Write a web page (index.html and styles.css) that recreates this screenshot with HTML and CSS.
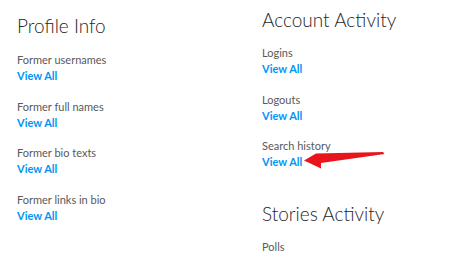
FILE: index.html
```html
<!DOCTYPE html>
<html>
<head>
    <title>Access Data</title>
    <link rel="stylesheet" href="styles.css">
</head>
<body>
    <div class="page">
        <div class="column column-left">
            <section class="section">
                <h2>Profile Info</h2>
                <div class="item">
                    <div class="label">Former usernames</div>
                    <a class="view-all" href="#">View All</a>
                </div>
                <div class="item">
                    <div class="label">Former full names</div>
                    <a class="view-all" href="#">View All</a>
                </div>
                <div class="item">
                    <div class="label">Former bio texts</div>
                    <a class="view-all" href="#">View All</a>
                </div>
                <div class="item">
                    <div class="label">Former links in bio</div>
                    <a class="view-all" href="#">View All</a>
                </div>
            </section>
        </div>
        <div class="column column-right">
            <section class="section">
                <h2>Account Activity</h2>
                <div class="item">
                    <div class="label">Logins</div>
                    <a class="view-all" href="#">View All</a>
                </div>
                <div class="item">
                    <div class="label">Logouts</div>
                    <a class="view-all" href="#">View All</a>
                </div>
                <div class="item">
                    <div class="label">Search history</div>
                    <a class="view-all" href="#">View All</a>
                </div>
            </section>
            <section class="section">
                <h2>Stories Activity</h2>
                <div class="item">
                    <div class="label">Polls</div>
                </div>
            </section>
        </div>
    </div>

    <!-- red pointer arrow drawn over the page -->
    <svg class="arrow" width="459" height="257" viewBox="0 0 459 257">
        <polygon points="304,160.5 316,153.5 383,152 384.5,154 321,163 321,168.5" fill="#e8161c"/>
    </svg>
</body>
</html>
```

FILE: styles.css
```css
body {
    margin: 0;
    font-family: Lato, "Open Sans", sans-serif;
    background-color: #fff;
}
.page {
    display: flex;
    padding: 8px 0 0 17px;
}
.column-left {
    width: 245px;
    padding-top: 6px;
}
.column-right {
    flex: 1;
}
.section + .section {
    margin-top: 32px;
}
h2 {
    margin: 0 0 12px;
    font-size: 19px;
    line-height: 24px;
    font-weight: 300;
    color: #262626;
}
.column-left h2 {
    margin-bottom: 13px;
}
.item {
    margin-bottom: 13.5px;
}
.label {
    font-size: 11px;
    line-height: 17px;
    color: #595959;
}
.view-all {
    display: block;
    font-size: 11px;
    line-height: 16px;
    font-weight: 700;
    color: #0095f6;
    text-decoration: none;
}
.arrow {
    position: absolute;
    left: 0;
    top: 0;
    pointer-events: none;
}
```
